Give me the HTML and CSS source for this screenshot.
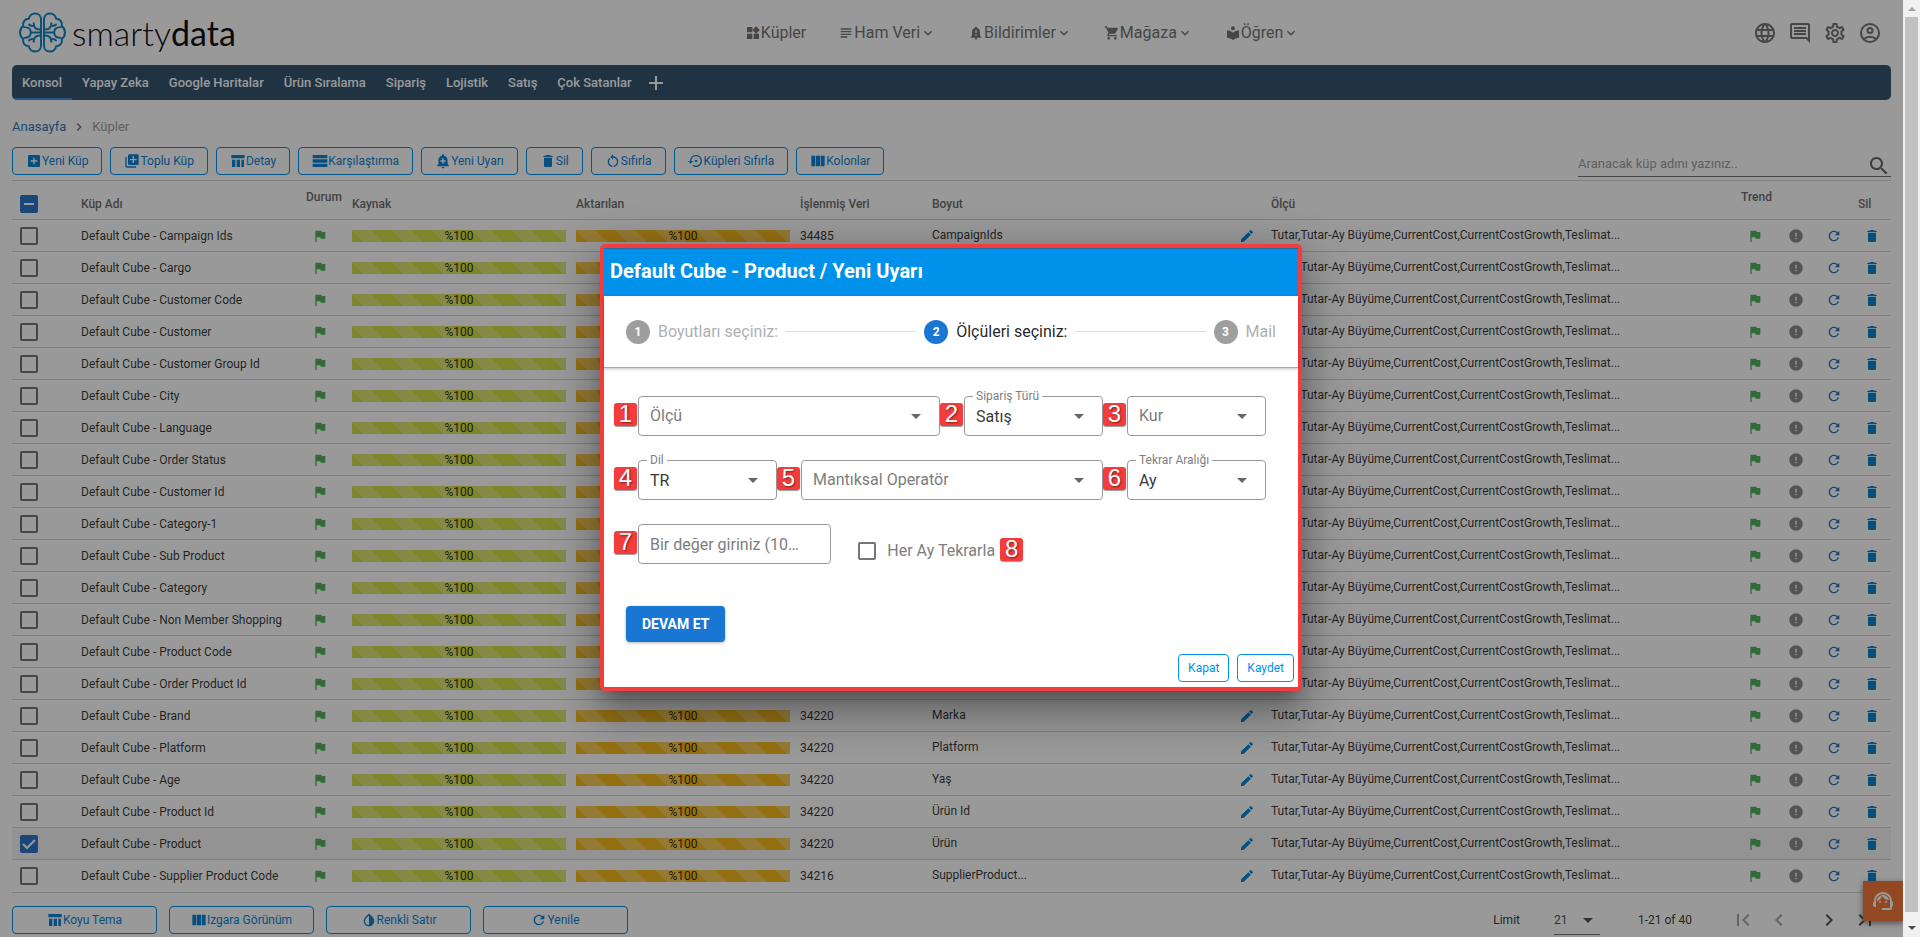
FILE: index.html
```html
<!DOCTYPE html>
<html lang="tr">
<head>
<meta charset="utf-8">
<title>smartydata - Küpler</title>
<link rel="stylesheet" href="styles.css">
</head>
<body>
<svg class="sprite" aria-hidden="true">
  <symbol id="i-addbox" viewBox="0 0 24 24"><path d="M19 3H5c-1.11 0-2 .9-2 2v14c0 1.1.89 2 2 2h14c1.1 0 2-.9 2-2V5c0-1.1-.9-2-2-2zm-2 10h-4v4h-2v-4H7v-2h4V7h2v4h4v2z"/></symbol>
  <symbol id="i-library" viewBox="0 0 24 24"><path d="M4 6H2v14c0 1.1.9 2 2 2h14v-2H4V6zm16-4H8c-1.1 0-2 .9-2 2v12c0 1.1.9 2 2 2h12c1.1 0 2-.9 2-2V4c0-1.1-.9-2-2-2zm-1 9h-4v4h-2v-4H9V9h4V5h2v4h4v2z"/></symbol>
  <symbol id="i-table" viewBox="0 0 24 24"><path d="M10 10h5v11h-5zM17 21h4V10h-4zM22 3H2v5h20zM3 21h5V10H3z"/></symbol>
  <symbol id="i-rows" viewBox="0 0 24 24"><path d="M1 3h22v5H1zM1 9.500h22v5H1zM1 16h22v5H1z"/></symbol>
  <symbol id="i-addalert" viewBox="0 0 24 24"><path d="M10.01 21.01c0 1.1.89 1.99 1.99 1.99s1.99-.89 1.99-1.99h-3.98zm8.87-4.19V11c0-3.25-2.25-5.97-5.29-6.69v-.72C13.59 2.71 12.88 2 12 2s-1.59.71-1.59 1.59v.72C7.37 5.03 5.12 7.75 5.12 11v5.82L3 18.94V20h18v-1.06l-2.12-2.12zM16 13.01h-3v3h-2v-3H8V11h3V8h2v3h3v2.01z"/></symbol>
  <symbol id="i-trash" viewBox="0 0 24 24"><path d="M6 19c0 1.1.9 2 2 2h8c1.1 0 2-.9 2-2V7H6v12zM19 4h-3.500l-1-1h-5l-1 1H5v2h14V4z"/></symbol>
  <symbol id="i-restart" viewBox="0 0 24 24"><path d="M12 5V2L8 6l4 4V7c3.31 0 6 2.69 6 6 0 2.970-2.170 5.430-5 5.910v2.020c3.950-.49 7-3.850 7-7.930 0-4.420-3.580-8-8-8zM6 13c0-1.650.67-3.150 1.760-4.240L6.340 7.340C4.900 8.790 4 10.790 4 13c0 4.080 3.050 7.440 7 7.930v-2.020c-2.830-.48-5-2.940-5-5.910z"/></symbol>
  <symbol id="i-restore" viewBox="0 0 24 24"><path d="M14 12c0-1.1-.9-2-2-2s-2 .9-2 2 .9 2 2 2 2-.9 2-2zm-2-9c-4.97 0-9 4.03-9 9H0l4 4 4-4H5c0-3.87 3.13-7 7-7s7 3.13 7 7-3.13 7-7 7c-1.51 0-2.91-.49-4.06-1.3l-1.42 1.44C8.04 20.3 9.94 21 12 21c4.97 0 9-4.03 9-9s-4.03-9-9-9z"/></symbol>
  <symbol id="i-columns" viewBox="0 0 24 24"><path d="M2 4h6v16H2zM9 4h6v16H9zM16 4h6v16h-6z"/></symbol>
  <symbol id="i-invert" viewBox="0 0 24 24"><path d="M17.66 7.93L12 2.27 6.34 7.93c-3.12 3.12-3.12 8.19 0 11.31C7.9 20.8 9.95 21.58 12 21.58c2.05 0 4.1-.78 5.66-2.34 3.12-3.12 3.12-8.19 0-11.31zM12 19.59c-1.6 0-3.11-.62-4.24-1.76C6.62 16.69 6 15.19 6 13.59s.62-3.11 1.76-4.24L12 5.1v14.49z"/></symbol>
  <symbol id="i-refresh" viewBox="0 0 24 24"><path d="M17.65 6.35C16.2 4.9 14.21 4 12 4c-4.42 0-7.99 3.58-7.99 8s3.57 8 7.99 8c3.73 0 6.84-2.55 7.73-6h-2.08c-.82 2.33-3.04 4-5.65 4-3.31 0-6-2.69-6-6s2.69-6 6-6c1.66 0 3.14.69 4.22 1.78L13 11h7V4l-2.35 2.35z"/></symbol>
  <symbol id="i-flag" viewBox="0 0 24 24"><path d="M14.4 6L14 4H5v17h2v-7h5.6l.4 2h7V6z"/></symbol>
  <symbol id="i-error" viewBox="0 0 24 24"><path d="M12 2C6.48 2 2 6.48 2 12s4.48 10 10 10 10-4.48 10-10S17.52 2 12 2zm1 15h-2v-2h2v2zm0-4h-2V7h2v6z"/></symbol>
  <symbol id="i-edit" viewBox="0 0 24 24"><path d="M3 17.25V21h3.75L17.81 9.94l-3.75-3.75L3 17.25zM20.71 7.04c.39-.39.39-1.02 0-1.41l-2.34-2.34c-.39-.39-1.02-.39-1.41 0l-1.83 1.83 3.75 3.75 1.83-1.83z"/></symbol>
  <symbol id="i-globe" viewBox="0 0 24 24"><path d="M11.99 2C6.47 2 2 6.48 2 12s4.47 10 9.99 10C17.52 22 22 17.52 22 12S17.52 2 11.99 2zm6.93 6h-2.95c-.32-1.25-.78-2.45-1.38-3.56 1.84.63 3.37 1.91 4.33 3.56zM12 4.04c.83 1.2 1.48 2.53 1.91 3.96h-3.82c.43-1.43 1.08-2.76 1.91-3.96zM4.26 14C4.1 13.36 4 12.69 4 12s.1-1.36.26-2h3.38c-.08.66-.14 1.32-.14 2 0 .68.06 1.34.14 2H4.26zm.82 2h2.95c.32 1.25.78 2.45 1.38 3.56-1.84-.63-3.37-1.9-4.33-3.56zm2.95-8H5.08c.96-1.66 2.49-2.93 4.33-3.56C8.81 5.55 8.35 6.75 8.03 8zM12 19.96c-.83-1.2-1.48-2.53-1.91-3.96h3.82c-.43 1.43-1.08 2.76-1.91 3.96zM14.34 14H9.66c-.09-.66-.16-1.32-.16-2 0-.68.07-1.35.16-2h4.68c.09.65.16 1.32.16 2 0 .68-.07 1.34-.16 2zm.25 5.56c.6-1.11 1.06-2.31 1.38-3.56h2.95c-.96 1.65-2.49 2.93-4.33 3.56zM16.36 14c.08-.66.14-1.32.14-2 0-.68-.06-1.34-.14-2h3.38c.16.64.26 1.31.26 2s-.1 1.36-.26 2h-3.38z"/></symbol>
  <symbol id="i-comment" viewBox="0 0 24 24"><path d="M21.99 4c0-1.1-.89-2-1.99-2H4c-1.1 0-2 .9-2 2v12c0 1.1.9 2 2 2h14l4 4-.01-18zM20 4v13.17L18.83 16H4V4h16zM6 12h12v2H6zm0-3h12v2H6zm0-3h12v2H6z"/></symbol>
  <symbol id="i-gear" viewBox="0 0 24 24"><path d="M19.43 12.98c.04-.32.07-.64.07-.98 0-.34-.03-.66-.07-.98l2.11-1.65c.19-.15.24-.42.12-.64l-2-3.46c-.09-.16-.26-.25-.44-.25-.06 0-.12.01-.17.03l-2.49 1c-.52-.4-1.08-.73-1.69-.98l-.38-2.65C14.46 2.18 14.25 2 14 2h-4c-.25 0-.46.18-.49.42l-.38 2.65c-.61.25-1.17.59-1.69.98l-2.49-1c-.06-.02-.12-.03-.18-.03-.17 0-.34.09-.43.25l-2 3.46c-.13.22-.07.49.12.64l2.11 1.65c-.04.32-.07.65-.07.98 0 .33.03.66.07.98l-2.11 1.65c-.19.15-.24.42-.12.64l2 3.46c.09.16.26.25.44.25.06 0 .12-.01.17-.03l2.49-1c.52.4 1.08.73 1.69.98l.38 2.65c.03.24.24.42.49.42h4c.25 0 .46-.18.49-.42l.38-2.65c.61-.25 1.17-.59 1.69-.98l2.49 1c.06.02.12.03.18.03.17 0 .34-.09.43-.25l2-3.46c.12-.22.07-.49-.12-.64l-2.11-1.65zm-1.98-1.71c.04.31.05.52.05.73 0 .21-.02.43-.05.73l-.14 1.13.89.7 1.08.84-.7 1.21-1.27-.51-1.04-.42-.9.68c-.43.32-.84.56-1.25.73l-1.06.43-.16 1.13-.2 1.35h-1.4l-.19-1.35-.16-1.13-1.06-.43c-.43-.18-.83-.41-1.23-.71l-.91-.7-1.06.43-1.27.51-.7-1.21 1.08-.84.89-.7-.14-1.13c-.03-.31-.05-.54-.05-.74s.02-.43.05-.73l.14-1.13-.89-.7-1.08-.84.7-1.21 1.27.51 1.04.42.9-.68c.43-.32.84-.56 1.25-.73l1.06-.43.16-1.13.2-1.35h1.39l.19 1.35.16 1.13 1.06.43c.43.18.83.41 1.23.71l.91.7 1.06-.43 1.27-.51.7 1.21-1.07.85-.89.7.14 1.13zM12 8c-2.21 0-4 1.79-4 4s1.79 4 4 4 4-1.79 4-4-1.79-4-4-4zm0 6c-1.1 0-2-.9-2-2s.9-2 2-2 2 .9 2 2-.9 2-2 2z"/></symbol>
  <symbol id="i-account" viewBox="0 0 24 24"><g fill="none" stroke="currentColor" stroke-width="2"><circle cx="12" cy="12" r="9"/><circle cx="12" cy="9.500" r="2.500"/><path d="M5.800 18.200c1.700-1.600 3.800-2.400 6.200-2.400s4.500.8 6.200 2.400"/></g></symbol>
  <symbol id="i-search" viewBox="0 0 24 24"><path d="M15.5 14h-.79l-.28-.27C15.41 12.59 16 11.11 16 9.5 16 5.91 13.09 3 9.5 3S3 5.91 3 9.5 5.91 16 9.5 16c1.61 0 3.09-.59 4.23-1.57l.27.28v.79l5 4.99L20.49 19l-4.99-5zm-6 0C7.01 14 5 11.99 5 9.5S7.01 5 9.5 5 14 7.01 14 9.5 11.99 14 9.5 14z"/></symbol>
  <symbol id="i-widgets" viewBox="0 0 24 24"><path d="M13 13v8h8v-8h-8zM3 21h8v-8H3v8zM3 3v8h8V3H3zm13.66-1.31L11 7.34 16.66 13l5.66-5.66-5.66-5.65z"/></symbol>
  <symbol id="i-subject" viewBox="0 0 24 24"><path d="M14 17H4v2h10v-2zm6-8H4v2h16V9zM4 15h16v-2H4v2zM4 5v2h16V5H4z"/></symbol>
  <symbol id="i-bell" viewBox="0 0 24 24"><path d="M18 16v-5c0-3.07-1.64-5.64-4.5-6.32V4c0-.83-.67-1.5-1.5-1.5s-1.5.67-1.5 1.5v.68C7.63 5.36 6 7.92 6 11v5l-2 2v1h16v-1l-2-2zm-5 0h-2v-2h2v2zm0-4h-2V8h2v4zm-1 10c1.1 0 2-.9 2-2h-4c0 1.1.89 2 2 2z"/></symbol>
  <symbol id="i-cart" viewBox="0 0 24 24"><path d="M7 18c-1.1 0-1.99.9-1.99 2S5.9 22 7 22s2-.9 2-2-.9-2-2-2zM1 2v2h2l3.6 7.59-1.35 2.45c-.16.28-.25.61-.25.96 0 1.1.9 2 2 2h12v-2H7.42c-.14 0-.25-.11-.25-.25l.03-.12.9-1.63h7.45c.75 0 1.41-.41 1.75-1.03l3.58-6.49c.08-.14.12-.31.12-.48 0-.55-.45-1-1-1H5.21l-.94-2H1zm16 16c-1.1 0-1.99.9-1.99 2s.89 2 1.99 2 2-.9 2-2-.9-2-2-2z"/></symbol>
  <symbol id="i-reader" viewBox="0 0 24 24"><path d="M12 11.55C9.64 9.35 6.48 8 3 8v11c3.48 0 6.64 1.35 9 3.55 2.36-2.19 5.52-3.55 9-3.55V8c-3.48 0-6.64 1.35-9 3.55zM12 8c1.66 0 3-1.34 3-3s-1.34-3-3-3-3 1.34-3 3 1.34 3 3 3z"/></symbol>
  <symbol id="i-agent" viewBox="0 0 24 24"><path d="M21 12.22C21 6.73 16.74 3 12 3c-4.69 0-9 3.65-9 9.28-.6.34-1 .98-1 1.72v2c0 1.1.9 2 2 2h1v-6.1c0-3.87 3.13-7 7-7s7 3.13 7 7V19h-8v2h8c1.1 0 2-.9 2-2v-1.22c.59-.31 1-.92 1-1.64v-2.3c0-.7-.41-1.31-1-1.62z"/><circle cx="9" cy="13" r="1"/><circle cx="15" cy="13" r="1"/><path d="M18 11.03C17.52 8.18 15.04 6 12.05 6c-3.03 0-6.29 2.51-6.03 6.45 2.47-1.01 4.33-3.21 4.86-5.89 1.31 2.63 4 4.44 7.12 4.47z"/></symbol>
  <symbol id="i-down" viewBox="0 0 24 24"><path d="M7.41 8.590L12 13.170l4.590-4.580L18 10l-6 6-6-6z"/></symbol>
  <symbol id="i-right" viewBox="0 0 24 24"><path d="M10 6L8.59 7.41 13.17 12l-4.58 4.59L10 18l6-6z"/></symbol>
  <symbol id="i-left" viewBox="0 0 24 24"><path d="M15.410 7.410L14 6l-6 6 6 6 1.410-1.410L10.830 12z"/></symbol>
  <symbol id="i-first" viewBox="0 0 24 24"><path d="M18.41 16.59L13.82 12l4.59-4.59L17 6l-6 6 6 6zM6 6h2v12H6z"/></symbol>
  <symbol id="i-last" viewBox="0 0 24 24"><path d="M5.590 7.410L10.180 12l-4.590 4.590L7 18l6-6-6-6zM16 6h2v12h-2z"/></symbol>
  <symbol id="i-caret" viewBox="0 0 24 24"><path d="M7 10l5 5 5-5z"/></symbol>
  <symbol id="i-plus" viewBox="0 0 24 24"><path d="M19 13h-6v6h-2v-6H5v-2h6V5h2v6h6z"/></symbol>
</svg>

<div class="shell">
  <main class="page">
    <header class="topbar">
      <a class="logo" href="#" aria-label="smartydata">
        <svg class="brain" viewBox="0 0 48 42" aria-hidden="true">
          <g id="lobe">
            <path d="M22.500 8C22.500 4 20 1.500 16.500 1.500S10.500 4 10 7C6 7 3.500 10 4.200 14.500 2 16 1 18.500 1 21s1 5 3.200 6.500C3.500 32 6 35 10 35c.5 3 3 5.500 6.500 5.500s6-2.500 6-6.500z"/>
            <path d="M22 21H12M5.500 15.500c4 0 6.500 2 6.500 5.500s-2.500 5.500-6.500 5.500M21.500 18c-4 0-6.500-2.500-6.500-6.500M15 14c-1.800.6-3.500.2-4.800-1.200M21.500 24c-4 0-6.500 2.500-6.500 6.500M15 28c-1.800-.6-3.500-.2-4.800 1.200"/>
          </g>
          <use href="#lobe" transform="matrix(-1 0 0 1 48 0)"/>
        </svg>
        <span class="wordmark">smarty<b>data</b></span>
      </a>
      <nav class="mainnav">
        <a href="#"><svg class="ic16"><use href="#i-widgets"/></svg>Küpler</a>
        <a href="#"><svg class="ic16"><use href="#i-subject"/></svg>Ham Veri<svg class="ic16"><use href="#i-down"/></svg></a>
        <a href="#"><svg class="ic16"><use href="#i-bell"/></svg>Bildirimler<svg class="ic16"><use href="#i-down"/></svg></a>
        <a href="#"><svg class="ic16"><use href="#i-cart"/></svg>Mağaza<svg class="ic16"><use href="#i-down"/></svg></a>
        <a href="#"><svg class="ic16"><use href="#i-reader"/></svg>Öğren<svg class="ic16"><use href="#i-down"/></svg></a>
      </nav>
      <div class="tools">
        <button type="button" aria-label="Dil"><svg class="ic24"><use href="#i-globe"/></svg></button>
        <button type="button" aria-label="Mesajlar"><svg class="ic24"><use href="#i-comment"/></svg></button>
        <button type="button" aria-label="Ayarlar"><svg class="ic24"><use href="#i-gear"/></svg></button>
        <button type="button" aria-label="Hesap"><svg class="ic24"><use href="#i-account"/></svg></button>
      </div>
    </header>

    <nav class="tabs">
      <a class="active" href="#">Konsol</a><a href="#">Yapay Zeka</a><a href="#">Google Haritalar</a><a href="#">Ürün Sıralama</a><a href="#">Sipariş</a><a href="#">Lojistik</a><a href="#">Satış</a><a href="#">Çok Satanlar</a>
      <button type="button" aria-label="Sekme ekle"><svg class="ic24"><use href="#i-plus"/></svg></button>
    </nav>

    <nav class="crumbs"><a href="#">Anasayfa</a><svg class="ic16"><use href="#i-right"/></svg><span>Küpler</span></nav>

    <div class="toolbar">
      <div class="actions">
        <button class="btn" type="button"><svg class="ic16"><use href="#i-addbox"/></svg>Yeni Küp</button>
        <button class="btn" type="button"><svg class="ic16"><use href="#i-library"/></svg>Toplu Küp</button>
        <button class="btn" type="button"><svg class="ic16"><use href="#i-table"/></svg>Detay</button>
        <button class="btn" type="button"><svg class="ic16"><use href="#i-rows"/></svg>Karşılaştırma</button>
        <button class="btn" type="button"><svg class="ic16"><use href="#i-addalert"/></svg>Yeni Uyarı</button>
        <button class="btn" type="button"><svg class="ic16"><use href="#i-trash"/></svg>Sil</button>
        <button class="btn" type="button"><svg class="ic16"><use href="#i-restart"/></svg>Sıfırla</button>
        <button class="btn" type="button"><svg class="ic16"><use href="#i-restore"/></svg>Küpleri Sıfırla</button>
        <button class="btn" type="button"><svg class="ic16"><use href="#i-columns"/></svg>Kolonlar</button>
      </div>
      <label class="search"><input type="text" placeholder="Aranacak küp adını yazınız.." aria-label="Küp ara"><svg class="ic24"><use href="#i-search"/></svg></label>
    </div>

    <table class="grid">
      <colgroup>
        <col class="c-check"><col class="c-name"><col class="c-state"><col class="c-bar"><col class="c-bar"><col class="c-count"><col class="c-dim"><col class="c-edit"><col><col class="c-trend"><col class="c-info"><col class="c-spin"><col class="c-del">
      </colgroup>
      <thead>
        <tr>
          <th class="check"><input id="all" class="mixed" type="checkbox" checked aria-label="Tümünü seç"></th>
          <th>Küp Adı</th><th class="raised">Durum</th><th>Kaynak</th><th>Aktarılan</th><th>İşlenmiş Veri</th><th>Boyut</th><th></th><th>Ölçü</th><th class="raised">Trend</th><th></th><th></th><th>Sil</th>
        </tr>
      </thead>
      <tbody id="rows"></tbody>
    </table>

    <footer class="foot">
      <div class="views">
        <button class="btn" type="button"><svg class="ic16"><use href="#i-table"/></svg>Koyu Tema</button>
        <button class="btn" type="button"><svg class="ic16"><use href="#i-columns"/></svg>Izgara Görünüm</button>
        <button class="btn" type="button"><svg class="ic16"><use href="#i-invert"/></svg>Renkli Satır</button>
        <button class="btn" type="button"><svg class="ic16"><use href="#i-refresh"/></svg>Yenile</button>
      </div>
      <div class="pager">
        <label for="limit">Limit</label>
        <span class="limit"><select id="limit"><option>21</option></select><svg class="ic24"><use href="#i-caret"/></svg></span>
        <span class="range">1-21 of 40</span>
        <div class="steps">
          <button type="button" disabled aria-label="İlk sayfa"><svg class="ic24"><use href="#i-first"/></svg></button>
          <button type="button" disabled aria-label="Önceki sayfa"><svg class="ic24"><use href="#i-left"/></svg></button>
          <button type="button" aria-label="Sonraki sayfa"><svg class="ic24"><use href="#i-right"/></svg></button>
          <button type="button" aria-label="Son sayfa"><svg class="ic24"><use href="#i-last"/></svg></button>
        </div>
      </div>
    </footer>

    <button class="support" type="button" aria-label="Destek"><svg class="ic24"><use href="#i-agent"/></svg></button>

    <div class="backdrop">
      <section class="dialog" role="dialog" aria-labelledby="dlg-title">
        <h2 id="dlg-title">Default Cube - Product / Yeni Uyarı</h2>
        <ol class="stepper">
          <li><span class="dot">1</span>Boyutları seçiniz:</li>
          <li class="line"></li>
          <li class="current"><span class="dot">2</span>Ölçüleri seçiniz:</li>
          <li class="line"></li>
          <li><span class="dot">3</span>Mail</li>
        </ol>
        <form class="form">
          <div class="field w6"><select class="empty" aria-label="Ölçü"><option>Ölçü</option></select><svg class="ic24"><use href="#i-caret"/></svg><span class="badge">1</span></div>
          <div class="field w3"><label for="f-order">Sipariş Türü</label><select id="f-order"><option>Satış</option></select><svg class="ic24"><use href="#i-caret"/></svg><span class="badge">2</span></div>
          <div class="field w3"><select class="empty" aria-label="Kur"><option>Kur</option></select><svg class="ic24"><use href="#i-caret"/></svg><span class="badge">3</span></div>
          <div class="field w3"><label for="f-lang">Dil</label><select id="f-lang"><option>TR</option></select><svg class="ic24"><use href="#i-caret"/></svg><span class="badge">4</span></div>
          <div class="field w6"><select class="empty" aria-label="Mantıksal Operatör"><option>Mantıksal Operatör</option></select><svg class="ic24"><use href="#i-caret"/></svg><span class="badge">5</span></div>
          <div class="field w3"><label for="f-repeat">Tekrar Aralığı</label><select id="f-repeat"><option>Ay</option></select><svg class="ic24"><use href="#i-caret"/></svg><span class="badge">6</span></div>
          <div class="field w4"><input class="text" type="text" placeholder="Bir değer giriniz (10…" aria-label="Bir değer giriniz"><span class="badge">7</span></div>
          <div class="tick w8"><input id="f-monthly" type="checkbox"><label for="f-monthly">Her Ay Tekrarla</label><span class="mark">8</span></div>
        </form>
        <div class="next"><button type="button">DEVAM ET</button></div>
        <div class="closing"><button class="btn" type="button">Kapat</button><button class="btn" type="button">Kaydet</button></div>
      </section>
    </div>
  </main>
  <div class="scroller" aria-hidden="true"><i class="up"></i><i class="thumb"></i><i class="dn"></i></div>
</div>
<script src="rows.js"></script>
</body>
</html>
```

FILE: styles.css
```css
* { box-sizing: border-box; }
body { margin: 0; font-family: Roboto, "Liberation Sans", sans-serif; font-size: 12px; line-height: 16px; color: rgba(0, 0, 0, .8); background: #fff; }
button, input, select { font: inherit; color: inherit; margin: 0; }
button { background: none; border: 0; padding: 0; cursor: pointer; }
a { color: inherit; text-decoration: none; }
svg { fill: currentColor; flex: none; display: block; }
.sprite { position: absolute; width: 0; height: 0; }
.ic16 { width: 16px; height: 16px; }
.ic24 { width: 24px; height: 24px; }

.shell { display: flex; height: 100vh; overflow: hidden; }
.page { flex: 1; min-width: 0; position: relative; padding: 0 12px; overflow: hidden; }

.topbar { display: grid; grid-template-columns: 39% 1fr auto; align-items: center; height: 65px; color: #757575; }
.logo { display: flex; align-items: center; gap: 6px; padding-left: 7px; color: #111; }
.brain { width: 47px; height: 41px; fill: none; stroke: #0b87c9; stroke-width: 2; stroke-linecap: round; stroke-linejoin: round; }
.wordmark { font-family: Lato, sans-serif; font-weight: 300; font-size: 34px; line-height: 40px; }
.wordmark b { font-weight: 400; }
.mainnav { display: flex; gap: 32px; font-size: 16px; line-height: 24px; }
.mainnav a { display: flex; align-items: center; }
.tools { display: flex; justify-content: flex-end; gap: 11px; padding-right: 9px; }

.tabs { display: flex; align-items: stretch; height: 35px; background: #345571; border-radius: 5px; color: #fff; font-size: 13px; font-weight: 500; overflow: hidden; }
.tabs a { display: flex; align-items: center; padding: 2px 10px 0; border-bottom: 2px solid transparent; }
.tabs a.active { border-color: #3b8fdc; }
.tabs button { padding: 0 2px; }

.crumbs { display: flex; align-items: center; gap: 8px; height: 47px; padding-top: 7px; font-size: 13px; color: #9e9e9e; }
.crumbs a { color: #2f76bf; }
.crumbs svg { color: #757575; margin: 0 -3px; }

.toolbar { display: flex; justify-content: space-between; align-items: flex-start; height: 33px; }
.actions { display: flex; gap: 8px; }
.btn { display: flex; align-items: center; justify-content: center; height: 28px; padding: 0 13px; border: 1px solid #0091ea; border-radius: 4px; color: #0d84d8; font-size: 12px; white-space: nowrap; }
.search { display: flex; align-items: center; width: 313px; height: 30px; border-bottom: 1px solid #757575; color: #666; font-size: 13px; }
.search input { flex: 1; min-width: 0; border: 0; outline: 0; background: none; padding: 3px 0 0; height: 24px; }
.search input::placeholder { color: #9e9e9e; }
.search svg { margin-top: 8px; }

.grid { width: 100%; border-collapse: separate; border-spacing: 0; table-layout: fixed; border-top: 1px solid #d4d4d4; }
.c-check { width: 69px; }
.c-name { width: 225px; }
.c-state { width: 46px; }
.c-bar { width: 224px; }
.c-count { width: 132px; }
.c-dim { width: 307px; }
.c-edit { width: 32px; }
.c-trend { width: 45px; }
.c-info { width: 38px; }
.c-spin { width: 34px; }
.c-del { width: 33px; }
.grid th, .grid td { padding: 0; text-align: left; vertical-align: middle; white-space: nowrap; border-bottom: 1px solid #d4d4d4; }
.grid th { height: 39px; padding-top: 7px; font-weight: 500; color: #707070; }
.grid th.raised { padding: 0 0 7px; }
.grid th.check { padding: 7px 0 0 8px; }
.grid td { height: 32px; }
.grid tr:last-child td { height: 33px; }
.grid td.check { padding-left: 8px; }
.grid td.text { padding-bottom: 2px; }
.grid td svg { width: 16px; height: 16px; }
.grid .flag { padding-left: 6px; color: #58b05c; }
.grid .pen, .grid .bin { color: #0d84d8; }
.grid .bin, .grid .flag.trend { padding-left: 6px; }
.grid .info, .grid .spin { padding-left: 2px; }
.grid .info { color: #8a8a8a; }
.grid .spin { color: #2f76bf; }
.grid tr.picked td { background: #f5f5f5; }
.bar { height: 12px; margin-right: 10px; font-size: 12px; line-height: 12px; text-align: center; background-color: #d1df48; background-image: linear-gradient(45deg, rgba(255, 255, 255, .25) 25%, transparent 25%, transparent 50%, rgba(255, 255, 255, .25) 50%, rgba(255, 255, 255, .25) 75%, transparent 75%, transparent); background-size: 40px 40px; }
.bar.amber { background-color: #f9bb20; }

input[type="checkbox"] { appearance: none; display: block; width: 18px; height: 18px; border: 2px solid #757575; border-radius: 2px; background: none center / 18px 18px no-repeat; }
input[type="checkbox"]:checked { border-color: #2c77cc; background-color: #2c77cc; background-origin: border-box; background-image: url("data:image/svg+xml,%3Csvg xmlns='http://www.w3.org/2000/svg' viewBox='0 0 18 18'%3E%3Cpath d='M3 9l4 4 8-8' fill='none' stroke='%23fff' stroke-width='2'/%3E%3C/svg%3E"); }
input[type="checkbox"].mixed:checked { background-image: linear-gradient(#fff, #fff); background-size: 10px 2px; }

.foot { display: flex; justify-content: space-between; padding-top: 13px; }
.views { display: flex; gap: 12px; }
.views .btn { width: 145px; }
.pager { display: flex; align-items: center; height: 28px; padding-right: 14px; }
.limit { display: flex; align-items: center; width: 46px; height: 29px; margin: 1px 38px 0 34px; border-bottom: 1px solid #757575; color: #555; }
.limit select { appearance: none; flex: 1; min-width: 0; border: 0; background: none; padding: 0; }
.range { margin-right: 39px; }
.steps { display: flex; gap: 12px; color: #555; }
.steps button:disabled { color: #a6a6a6; }
.steps button:nth-child(3) { margin-left: 14px; }
.support { position: absolute; right: 0; bottom: 16px; display: flex; align-items: center; justify-content: center; width: 40px; height: 40px; background: #f4783a; color: #fff; box-shadow: 0 2px 6px rgba(0, 0, 0, .5); }

.backdrop { position: absolute; inset: 0; display: flex; align-items: center; justify-content: center; padding: 0 1px 2px 0; background: rgba(0, 0, 0, .4); }
.dialog { width: 702px; background: #fff; border: 4px solid #f43c3c; border-radius: 5px; box-shadow: 0 11px 15px -7px rgba(0, 0, 0, .3), 0 24px 38px 3px rgba(0, 0, 0, .2), 0 9px 46px 8px rgba(0, 0, 0, .16); }
.dialog h2 { margin: 0; padding: 10px 6px 13px; background: #0091ea; border-top: 1px solid #1f6ba8; color: #fff; font-size: 20px; line-height: 24px; font-weight: 700; }
.stepper { display: flex; align-items: center; gap: 8px; height: 72px; margin: 0; padding: 0 22px; list-style: none; font-size: 16px; line-height: 24px; color: #b0b0b0; border-bottom: 1px solid #a8a8a8; box-shadow: 0 1px 3px rgba(0, 0, 0, .25); }
.stepper li { display: flex; align-items: center; gap: 8px; }
.stepper .line { flex: 1; height: 1px; background: #dcdcdc; }
.stepper .current { color: rgba(0, 0, 0, .87); }
.dot { width: 24px; height: 24px; border-radius: 50%; background: #9e9e9e; color: #fff; font-size: 12px; font-weight: 700; text-align: center; }
.current .dot { background: #1976d2; }
.form { display: grid; grid-template-columns: repeat(12, 1fr); gap: 24px; padding: 28px 32px 0 34px; }
.w3 { grid-column: span 3; }
.w4 { grid-column: span 4; }
.w6 { grid-column: span 6; }
.w8 { grid-column: span 8; }
.field { position: relative; display: grid; height: 40px; font-size: 16px; color: #3a3a3a; }
.field > select, .field > .text { grid-area: 1 / 1; appearance: none; width: 100%; height: 40px; padding: 2px 11px 0; border: 1px solid #9a9a9a; border-radius: 4px; background: none; line-height: 24px; }
.field > .empty, .field > .text { padding-top: 0; }
.field > .empty, .field > .text::placeholder { color: #7d7d7d; opacity: 1; }
.field > svg { grid-area: 1 / 1; justify-self: end; align-self: center; margin-right: 12px; color: #666; pointer-events: none; }
.field > label { position: absolute; left: 9px; top: -8px; padding: 0 3px; background: #fff; font-size: 12px; color: #808080; }
.badge, .mark { width: 23px; height: 23px; border-radius: 3px; background: #f43c3c; color: #fff; font: 24px/21px "Liberation Sans", sans-serif; text-align: center; text-shadow: 1px 1px 2px rgba(0, 0, 0, .5); box-shadow: 0 1px 1px rgba(0, 0, 0, .4); }
.badge { position: absolute; left: -24px; top: 7px; }
.tick { display: flex; align-items: center; gap: 11px; padding: 14px 0 0 3px; font-size: 16px; line-height: 24px; color: #7d7d7d; }
.tick .mark { margin: 0 0 3px -6px; }
.next { padding: 42px 22px 0; }
.next button { height: 36px; padding: 0 16px; border-radius: 4px; background: #1976d2; color: #fff; font-size: 14px; font-weight: 700; box-shadow: 0 1px 3px rgba(0, 0, 0, .3); }
.closing { display: flex; justify-content: flex-end; gap: 8px; padding: 12px 4px 5px; }
.closing .btn { padding: 0 9px; color: #0091ea; }

.scroller { display: flex; flex-direction: column; align-items: center; width: 17px; background: #f1f1f1; padding: 7px 0; }
.scroller .up, .scroller .dn { border: 4px solid transparent; }
.scroller .up { border-top: 0; border-bottom-color: #a3a3a3; }
.scroller .dn { border-bottom: 0; border-top-color: #505050; }
.scroller .thumb { flex: 1; width: 13px; margin: 6px 0 14px; background: #c1c1c1; }
```

FILE: rows.js
```js
const cubes = [
  ["Campaign Ids", 34485, "CampaignIds"],
  ["Cargo", 34220, "Kargo"],
  ["Customer Code", 34220, "Müşteri Kodu"],
  ["Customer", 34220, "Müşteri"],
  ["Customer Group Id", 34220, "Müşteri Grup Id"],
  ["City", 34220, "Şehir"],
  ["Language", 34220, "Dil"],
  ["Order Status", 34220, "Sipariş Durumu"],
  ["Customer Id", 34220, "Müşteri Id"],
  ["Category-1", 34220, "Kategori-1"],
  ["Sub Product", 34220, "Alt Ürün"],
  ["Category", 34220, "Kategori"],
  ["Non Member Shopping", 34220, "Üyesiz Alışveriş"],
  ["Product Code", 34220, "Ürün Kodu"],
  ["Order Product Id", 34220, "Sipariş Ürün Id"],
  ["Brand", 34220, "Marka"],
  ["Platform", 34220, "Platform"],
  ["Age", 34220, "Yaş"],
  ["Product Id", 34220, "Ürün Id"],
  ["Product", 34220, "Ürün"],
  ["Supplier Product Code", 34216, "SupplierProduct..."]
];
const icon = (name) => `<svg><use href="#i-${name}"/></svg>`;
document.getElementById("rows").innerHTML = cubes.map(([name, count, dim]) => {
  const picked = name === "Product";
  return `<tr class="${picked ? "picked" : ""}">
    <td class="check"><input type="checkbox" aria-label="${name}" ${picked ? "checked" : ""}></td>
    <td>Default Cube - ${name}</td>
    <td class="flag">${icon("flag")}</td>
    <td><div class="bar">%100</div></td>
    <td><div class="bar amber">%100</div></td>
    <td>${count}</td>
    <td class="text">${dim}</td>
    <td class="pen">${icon("edit")}</td>
    <td class="text">Tutar,Tutar-Ay Büyüme,CurrentCost,CurrentCostGrowth,Teslimat...</td>
    <td class="flag trend">${icon("flag")}</td>
    <td class="info">${icon("error")}</td>
    <td class="spin">${icon("refresh")}</td>
    <td class="bin">${icon("trash")}</td>
  </tr>`;
}).join("");
```
